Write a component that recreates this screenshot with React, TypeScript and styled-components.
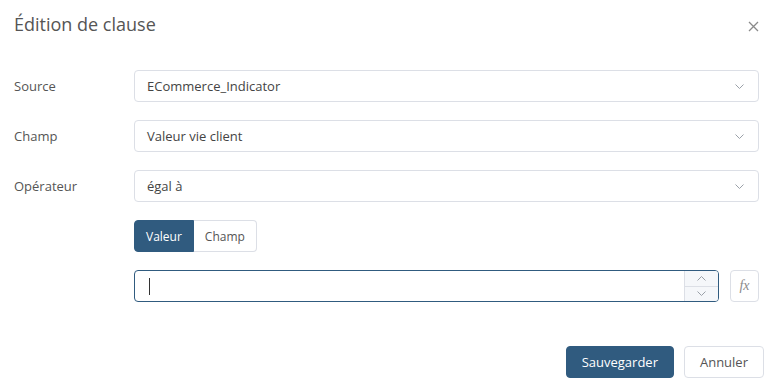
import React from "react";
import styled, { createGlobalStyle } from "styled-components";

const GlobalStyle = createGlobalStyle`
  body {
    margin: 0;
    background: #ffffff;
    font-family: "Open Sans", "Liberation Sans", sans-serif;
  }
`;

const primary = "#305b7f";
const border = "#dcdfe6";

const Chevron: React.FC<{ up?: boolean }> = ({ up }) => (
  <svg width="9" height="5" viewBox="0 0 9 5">
    <path
      d={up ? "M0.5 4.5 L4.5 0.5 L8.5 4.5" : "M0.5 0.5 L4.5 4.5 L8.5 0.5"}
      fill="none"
      stroke="#9aa0a8"
      strokeWidth="1"
    />
  </svg>
);

const CloseIcon = () => (
  <svg width="11" height="11" viewBox="0 0 11 11">
    <path d="M1 1 L10 10 M10 1 L1 10" stroke="#8a8a8a" strokeWidth="1.3" />
  </svg>
);

const fields = [
  { label: "Source", value: "ECommerce_Indicator" },
  { label: "Champ", value: "Valeur vie client" },
  { label: "Opérateur", value: "égal à" },
];

const App: React.FC = () => {
  return (
    <>
      <GlobalStyle />
      <Dialog>
        <Header>
          <Title>Édition de clause</Title>
          <CloseButton>
            <CloseIcon />
          </CloseButton>
        </Header>
        <Form>
          {fields.map((f) => (
            <Row key={f.label}>
              <Label>{f.label}</Label>
              <Select>
                <span>{f.value}</span>
                <Chevron />
              </Select>
            </Row>
          ))}
          <Row>
            <span />
            <Toggle>
              <ToggleButton $active>Valeur</ToggleButton>
              <ToggleButton>Champ</ToggleButton>
            </Toggle>
          </Row>
          <Row>
            <span />
            <InputLine>
              <NumberInput>
                <Caret />
                <Spinner>
                  <SpinHalf>
                    <Chevron up />
                  </SpinHalf>
                  <SpinHalf $bottom>
                    <Chevron />
                  </SpinHalf>
                </Spinner>
              </NumberInput>
              <FxButton>fx</FxButton>
            </InputLine>
          </Row>
        </Form>
        <Footer>
          <Button $primary>Sauvegarder</Button>
          <Button>Annuler</Button>
        </Footer>
      </Dialog>
    </>
  );
};

const Dialog = styled.div`
  width: 775px;
  height: 390px;
  box-sizing: border-box;
  display: flex;
  flex-direction: column;
  color: #555;
`;

const Header = styled.div`
  height: 52px;
  display: flex;
  align-items: center;
  justify-content: space-between;
  padding: 0 16px 0 14px;
`;

const Title = styled.h2`
  margin: 0;
  font-size: 18px;
  font-weight: 400;
  color: #555;
  margin-top: -4px;
`;

const CloseButton = styled.div`
  width: 11px;
  height: 11px;
  display: flex;
`;

const Form = styled.div`
  display: flex;
  flex-direction: column;
  gap: 18px;
  margin-top: 18px;
  padding: 0 16px 0 14px;
`;

const Row = styled.div`
  display: grid;
  grid-template-columns: 120px 1fr;
  align-items: center;
  height: 32px;
`;

const Label = styled.div`
  font-size: 13px;
  color: #555;
`;

const Select = styled.div`
  height: 32px;
  box-sizing: border-box;
  border: 1px solid ${border};
  border-radius: 4px;
  display: flex;
  align-items: center;
  justify-content: space-between;
  padding: 0 14px 0 12px;
  font-size: 13px;
  color: #444;
`;

const Toggle = styled.div`
  display: flex;
  height: 32px;
`;

const ToggleButton = styled.div<{ $active?: boolean }>`
  height: 32px;
  box-sizing: border-box;
  display: flex;
  align-items: center;
  padding: 0 11px;
  font-size: 12px;
  background: ${(p) => (p.$active ? primary : "#fff")};
  color: ${(p) => (p.$active ? "#fff" : "#555")};
  border: 1px solid ${(p) => (p.$active ? primary : border)};
  border-radius: ${(p) => (p.$active ? "4px 0 0 4px" : "0 4px 4px 0")};
  ${(p) => (p.$active ? "" : "border-left: none;")}
`;

const InputLine = styled.div`
  display: flex;
  gap: 11px;
  align-items: center;
`;

const NumberInput = styled.div`
  flex: 1;
  height: 32px;
  box-sizing: border-box;
  border: 1px solid ${primary};
  border-radius: 4px;
  display: flex;
  align-items: center;
  justify-content: space-between;
  padding-left: 14px;
  overflow: hidden;
`;

const Caret = styled.div`
  width: 1px;
  height: 17px;
  background: #333;
`;

const Spinner = styled.div`
  width: 33px;
  height: 100%;
  display: flex;
  flex-direction: column;
  border-left: 1px solid ${border};
  background: #f5f7fa;
`;

const SpinHalf = styled.div<{ $bottom?: boolean }>`
  flex: 1;
  display: flex;
  align-items: center;
  justify-content: center;
  ${(p) => (p.$bottom ? `border-top: 1px solid ${border};` : "")}
`;

const FxButton = styled.div`
  width: 29px;
  height: 32px;
  box-sizing: border-box;
  border: 1px solid ${border};
  border-radius: 4px;
  display: flex;
  align-items: center;
  justify-content: center;
  font-family: "Liberation Serif", serif;
  font-style: italic;
  font-size: 14px;
  color: #8a8a8a;
`;

const Footer = styled.div`
  display: flex;
  justify-content: flex-end;
  gap: 10px;
  margin-top: 44px;
  padding-right: 11px;
`;

const Button = styled.div<{ $primary?: boolean }>`
  height: 32px;
  box-sizing: border-box;
  display: flex;
  align-items: center;
  padding: 0 15px;
  font-size: 13px;
  border-radius: 4px;
  background: ${(p) => (p.$primary ? primary : "#fff")};
  color: ${(p) => (p.$primary ? "#fff" : "#555")};
  border: 1px solid ${(p) => (p.$primary ? primary : border)};
`;

export default App;
